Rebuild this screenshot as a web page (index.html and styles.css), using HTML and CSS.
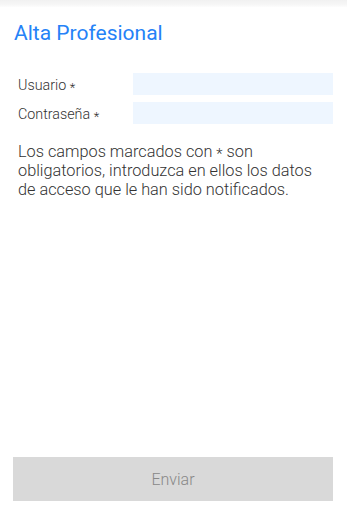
FILE: index.html
```html
<!DOCTYPE html>
<html lang="es">
<head>
<meta charset="utf-8">
<title>Alta Profesional</title>
<link rel="stylesheet" href="styles.css">
</head>
<body>
<div class="page">
  <div class="topbar"></div>
  <h1 class="title">Alta Profesional</h1>
  <form class="form">
    <div class="row">
      <label class="label" for="user">Usuario <span class="req">*</span></label>
      <input class="input" id="user" type="text">
    </div>
    <div class="row">
      <label class="label" for="pass">Contraseña <span class="req">*</span></label>
      <input class="input" id="pass" type="password">
    </div>
    <p class="note">Los campos marcados con <span class="req">*</span> son obligatorios, introduzca en ellos los datos de acceso que le han sido notificados.</p>
    <div class="spacer"></div>
    <button class="submit" type="button">Enviar</button>
  </form>
</div>
</body>
</html>
```

FILE: styles.css
```css
* { box-sizing: border-box; }
html, body { margin: 0; padding: 0; background: #fff; }
body {
  font-family: Roboto, "Noto Sans", sans-serif;
  width: 347px;
  height: 512px;
  overflow: hidden;
}
.page {
  display: flex;
  flex-direction: column;
  height: 512px;
}
.topbar {
  height: 7px;
  background: linear-gradient(#f1f1f1, #f7f7f7 70%, #fdfdfd);
}
.title {
  margin: 13px 0 0 14px;
  font-size: 21px;
  font-weight: 400;
  color: #2582f7;
  line-height: 26px;
}
.form {
  display: flex;
  flex-direction: column;
  flex: 1;
  padding: 0 14px 11px 13px;
}
.row {
  display: flex;
  align-items: center;
  height: 22px;
  margin-top: 7px;
}
.row:first-child { margin-top: 27px; }
.label {
  width: 120px;
  padding-left: 5px;
  padding-top: 2px;
  font-size: 14.3px;
  line-height: 18px;
  font-weight: 300;
  color: #333;
}
.req {
  font-size: 0.9em;
  line-height: 0;
  vertical-align: -0.14em;
}
.input {
  flex: 1;
  height: 22px;
  border: 0;
  background: #eef6ff;
  outline: none;
}
.note {
  margin: 18px 10px 0 5px;
  font-size: 16.3px;
  line-height: 19px;
  font-weight: 300;
  color: #333;
}
.spacer { flex: 1; }
.submit {
  height: 44px;
  border: 0;
  background: #d9d9d9;
  color: #888;
  font-family: Roboto, sans-serif;
  font-size: 16px;
  font-weight: 300;
}
```
